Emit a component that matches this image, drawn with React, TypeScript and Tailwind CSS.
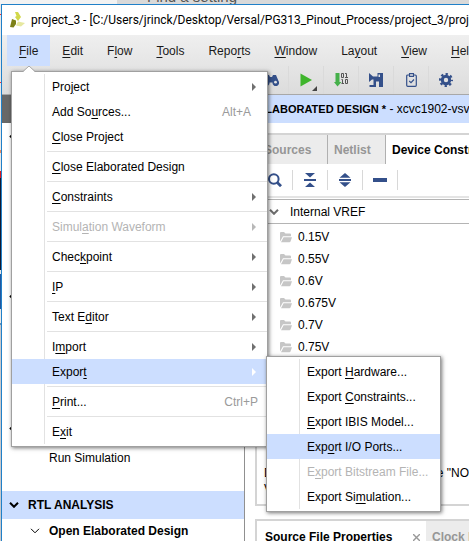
import type { ReactNode } from "react";

type Entry = {
  label: string;
  mnemonic?: number;
  shortcut?: string;
  submenu?: boolean;
  disabled?: boolean;
  active?: boolean;
  separated?: boolean;
};

const menuBar = [
  { label: "File", mnemonic: 0 },
  { label: "Edit", mnemonic: 0 },
  { label: "Flow", mnemonic: 1 },
  { label: "Tools", mnemonic: 0 },
  { label: "Reports", mnemonic: 4 },
  { label: "Window", mnemonic: 0 },
  { label: "Layout", mnemonic: 2 },
  { label: "View", mnemonic: 0 },
  { label: "Help", mnemonic: 0 },
];

const fileMenu: Entry[] = [
  { label: "Project", mnemonic: 3, submenu: true },
  { label: "Add Sources...", mnemonic: 6, shortcut: "Alt+A" },
  { label: "Close Project", mnemonic: 0 },
  { label: "Close Elaborated Design", mnemonic: 0, separated: true },
  { label: "Constraints", mnemonic: 0, submenu: true, separated: true },
  { label: "Simulation Waveform", mnemonic: 5, submenu: true, disabled: true, separated: true },
  { label: "Checkpoint", mnemonic: 4, submenu: true, separated: true },
  { label: "IP", mnemonic: 0, submenu: true, separated: true },
  { label: "Text Editor", mnemonic: 6, submenu: true, separated: true },
  { label: "Import", mnemonic: 1, submenu: true, separated: true },
  { label: "Export", mnemonic: 5, submenu: true, active: true },
  { label: "Print...", mnemonic: 0, shortcut: "Ctrl+P", separated: true },
  { label: "Exit", mnemonic: 1, separated: true },
];

const exportMenu: Entry[] = [
  { label: "Export Hardware...", mnemonic: 7 },
  { label: "Export Constraints...", mnemonic: 7 },
  { label: "Export IBIS Model...", mnemonic: 0 },
  { label: "Export I/O Ports...", mnemonic: 3, active: true },
  { label: "Export Bitstream File...", mnemonic: 1, disabled: true },
  { label: "Export Simulation...", mnemonic: 9 },
];

const voltages = ["0.15V", "0.55V", "0.6V", "0.675V", "0.7V", "0.75V"];

function Mnemonic({ label, at }: { label: string; at?: number }) {
  if (at === undefined) return <>{label}</>;
  return (
    <>
      {label.slice(0, at)}
      <span className="underline underline-offset-2">{label[at]}</span>
      {label.slice(at + 1)}
    </>
  );
}

function PopupMenu({ entries, name }: { entries: Entry[]; name: string }) {
  return (
    <div
      role="menu"
      aria-label={name}
      className="relative border border-[#a0a0a0] bg-white py-[2px] shadow-[1px_1px_4px_rgba(0,0,0,0.55)]"
    >
      <div className="absolute top-[2px] bottom-[2px] left-8 w-px bg-[#e2e2e2]" />
      {entries.map((e) => (
        <div key={e.label} className="relative">
          {e.separated && (
            <div className="flex h-[5px] items-center pl-[35px]">
              <div className="h-px w-full bg-[#e2e2e2]" />
            </div>
          )}
          <button
            role="menuitem"
            disabled={e.disabled}
            className={`flex h-[25px] w-full items-center justify-between pl-10 text-left whitespace-nowrap ${
              e.active ? "bg-[#ccdeff]" : ""
            } ${e.disabled ? "text-[#b4b4b4]" : "text-black"}`}
          >
            <span>
              <Mnemonic label={e.label} at={e.mnemonic} />
            </span>
            {e.shortcut && (
              <span className={`text-[#9a9a9a] ${e.shortcut === "Ctrl+P" ? "pr-[9px]" : "pr-4"}`}>{e.shortcut}</span>
            )}
            {e.submenu && (
              <svg
                className={`mr-[11px] h-2 w-1 ${e.active ? "text-white" : e.disabled ? "text-[#b8b8b8]" : "text-[#707070]"}`}
                viewBox="0 0 4 8"
                fill="currentColor"
              >
                <path d="M0 0L4 4L0 8Z" />
              </svg>
            )}
          </button>
        </div>
      ))}
    </div>
  );
}

function ToolButton({ name, children, className = "" }: { name: string; children: ReactNode; className?: string }) {
  return (
    <button
      aria-label={name}
      className={`relative flex w-[35px] shrink-0 items-center justify-center border-r ${className}`}
    >
      {children}
    </button>
  );
}

function Chevron({ className = "" }: { className?: string }) {
  return (
    <svg className={`h-[6px] w-[10px] shrink-0 ${className}`} viewBox="0 0 10 6" fill="none" stroke="currentColor">
      <path d="M1 0.8L5 4.8L9 0.8" />
    </svg>
  );
}

function Folder() {
  return (
    <svg className="h-[11px] w-3 shrink-0" viewBox="0 0 12 11" fill="#c6c6c6">
      <path d="M0 1Q0 0 1 0H4L5.5 1.5H10Q11 1.5 11 2.5V4.3H3L1.2 7.5L0 9.5Z" />
      <path d="M3.6 5.3H12L10.6 9.3Q10.3 10.2 9.4 10.2H1Z" />
    </svg>
  );
}

function Toolbar() {
  return (
    <div className="flex h-7 pl-[252px]">
      <ToolButton name="Find" className="border-[#dadada]">
        <svg className="h-[12px] w-[16px]" viewBox="0 0 16 12" fill="#34508a">
          <path d="M3 1H6L7 3H9L10 1H13L15.5 7A3.3 3.3 0 1 1 9.5 8.5H6.5A3.3 3.3 0 1 1 .5 7Z" />
          <circle cx="3.5" cy="8.2" r="1.4" fill="#e2e2e2" />
          <circle cx="12.5" cy="8.2" r="1.4" fill="#e2e2e2" />
        </svg>
      </ToolButton>
      <ToolButton name="Run" className="border-[#dadada]">
        <svg className="h-[14px] w-[12px]" viewBox="0 0 12 14" fill="#3fb52c">
          <path d="M0.5 0.5L12 7L0.5 13.5Z" />
        </svg>
        <svg className="absolute right-[6px] bottom-[3px] size-[5px]" viewBox="0 0 5 5" fill="#444">
          <path d="M5 0V5H0Z" />
        </svg>
      </ToolButton>
      <ToolButton name="Generate Bitstream" className="border-[#dadada]">
        <svg className="h-[14px] w-[14px]" viewBox="0 0 14 14">
          <path d="M1.5 0H5.5V9H7.5L3.5 13.5L0 9H1.5Z" fill="#45b04a" />
          <g fill="none" stroke="#555" strokeWidth="1">
            <path d="M7.5 0.5H9.5V4.5H7.5ZM11 0.5H12.5V4.5M11 4.5H14" />
            <path d="M7.5 6.5H8.5V10.5M7.5 10.5H10M11.5 6.5H13.5V10.5H11.5Z" />
          </g>
        </svg>
      </ToolButton>
      <ToolButton name="Open Block Design" className="border-[#dadada]">
        <svg className="h-[14px] w-[14px]" viewBox="0 0 14 14" fill="#34508a">
          <path d="M0 0L4 3.5H8.5V0H14V14H10V8.5H7V14H0.5V12H4.5V6.5H3L0 9Z" />
          <path d="M9.5 1.5H11V4H9.5Z" fill="#e2e2e2" />
        </svg>
      </ToolButton>
      <ToolButton name="Report" className="border-[#dadada]">
        <svg className="h-[14px] w-[11px]" viewBox="0 0 11 14" fill="none" stroke="#34508a">
          <rect x="0.7" y="2" width="9.6" height="11.3" rx="1" strokeWidth="1.2" />
          <path d="M3.5 0.6H7.5V3.4H3.5Z" fill="#e2e2e2" strokeWidth="1.1" />
          <path d="M3.2 8L5 9.7L8 6.5" strokeWidth="1.2" />
        </svg>
      </ToolButton>
      <ToolButton name="Settings" className="border-transparent">
        <svg className="size-[14px]" viewBox="0 0 14 14" fill="none" stroke="#34508a">
          <circle cx="7" cy="7" r="3.7" strokeWidth="3" />
          <circle cx="7" cy="7" r="5.9" strokeWidth="2.2" strokeDasharray="2.32 2.32" strokeDashoffset="1.16" />
        </svg>
      </ToolButton>
    </div>
  );
}

function Navigator() {
  return (
    <aside className="flex w-[243px] shrink-0 flex-col border-r border-[#909090] bg-white">
      <div className="h-[28px] shrink-0 bg-[#686868]" />
      <div className="h-[160px] shrink-0 pt-3 pl-[7px]">
        <Chevron className="stroke-2" />
      </div>
      <div className="h-[132px] shrink-0 pt-3 pl-[7px]">
        <Chevron className="stroke-2" />
      </div>
      <div className="h-[33px] shrink-0 pt-3 pl-[7px]">
        <Chevron className="stroke-2" />
      </div>
      <a href="#run" className="py-[2px] pl-[47px] leading-4">
        Run Simulation
      </a>
      <div className="mt-[23px] flex h-7 shrink-0 items-center gap-[9px] bg-[#ccdeff] pl-[7px] font-bold">
        <Chevron className="stroke-2" />
        RTL ANALYSIS
      </div>
      <div className="flex h-6 shrink-0 items-center gap-[9px] pl-7 font-bold">
        <Chevron />
        Open Elaborated Design
      </div>
    </aside>
  );
}

function Workspace() {
  return (
    <main className="flex min-w-0 flex-1 flex-col whitespace-nowrap">
      <h1 className="flex h-7 shrink-0 items-center bg-[#ccdeff] pl-[13px]">
        <span className="text-[11px] font-bold">ELABORATED DESIGN&nbsp;*</span>
        <span>&nbsp;- xcvc1902-vsva2197</span>
      </h1>
      <section className="mt-[10px] ml-[10px] h-[373px] shrink-0 border-2 border-r-0 border-[#d4d4d4]">
        <div role="tablist" className="flex h-[29px] font-bold">
          <button
            role="tab"
            className="w-[71px] shrink-0 border-r border-[#b0b0b0] bg-[#ececec] pl-[7px] text-left text-[#969696]"
          >
            Sources
          </button>
          <button
            role="tab"
            className="w-[58px] shrink-0 border-r border-[#b0b0b0] bg-[#ececec] pl-[6px] text-left text-[#969696]"
          >
            Netlist
          </button>
          <button role="tab" aria-selected="true" className="shrink-0 pl-[6px]">
            Device Constraints
          </button>
        </div>
        <div className="flex h-[34px] items-center border-b-2 border-[#e4e4e4] text-[#34508a]">
          <button aria-label="Search" className="flex h-5 w-9 items-center justify-center border-r border-[#d8d8d8]">
            <svg className="size-[14px]" viewBox="0 0 14 14" fill="none" stroke="currentColor" strokeWidth="2">
              <circle cx="5.8" cy="6" r="4.8" />
              <path d="M9.3 9.5L13 13.2" strokeWidth="2.8" />
            </svg>
          </button>
          <button aria-label="Collapse All" className="flex h-5 w-[35px] items-center justify-center border-r border-[#d8d8d8]">
            <svg className="h-[14px] w-3" viewBox="0 0 12 14" fill="currentColor">
              <path d="M1 0H11L6 4.5ZM0 6H12V8H0ZM1 14H11L6 9.5Z" />
            </svg>
          </button>
          <button aria-label="Expand All" className="flex h-5 w-[35px] items-center justify-center border-r border-[#d8d8d8]">
            <svg className="h-[14px] w-3" viewBox="0 0 12 14" fill="currentColor">
              <path d="M0.5 4.7L6 0L11.5 4.7ZM0 6H12V8H0ZM0.5 9.3L6 14L11.5 9.3Z" />
            </svg>
          </button>
          <button aria-label="Remove" className="flex h-5 w-[35px] items-center justify-center border-r border-[#d8d8d8]">
            <svg className="h-1 w-[14px]" viewBox="0 0 14 4" fill="currentColor">
              <path d="M0 0H14V4H0Z" />
            </svg>
          </button>
        </div>
        <div className="mt-px flex h-[25px] items-center gap-[11px] border-y border-[#b4b4b4] pl-3">
          <Chevron className="stroke-2 text-[#6c6c6c]" />
          Internal VREF
        </div>
        <ul className="pt-[2px]">
          {voltages.map((v) => (
            <li key={v} className="flex h-[22px] items-center gap-[6px] pl-[23px]">
              <Folder />
              {v}
            </li>
          ))}
        </ul>
        <div className="mt-[107px] pl-[7px] leading-4">
          <p>Drop I/O banks on voltages or the "NONE" folder</p>
          <p>VREF.</p>
        </div>
      </section>
      <section className="mt-[13px] ml-[10px] shrink-0 border-2 border-r-0 border-b-0 border-[#d4d4d4]">
        <div role="tablist" className="flex h-8 font-bold">
          <button
            role="tab"
            aria-selected="true"
            className="flex w-[169px] shrink-0 items-center justify-between pr-[6px] pl-2"
          >
            Source File Properties
            <svg className="size-[7px]" viewBox="0 0 7 7" stroke="#999" strokeWidth="1.4">
              <path d="M0 0L7 7M7 0L0 7" />
            </svg>
          </button>
          <button role="tab" className="shrink-0 grow bg-[#ececec] pl-[6px] text-left text-[#969696]">
            Clock Regions
          </button>
        </div>
      </section>
    </main>
  );
}

function BackgroundEdge() {
  return (
    <div className="flex w-px shrink-0 flex-col bg-[#e8e8e8]">
      <div className="mt-[10px] h-px bg-red-500" />
      <div className="mt-[67px] h-px bg-red-500" />
      <div className="mt-[67px] h-[3px] bg-[#e88860]" />
      <div className="mt-[18px] h-[7px] bg-[#d81820]" />
      <div className="h-[92px] bg-[#101830]" />
      <div className="mt-1 h-[35px] bg-[#2058a0]" />
      <div className="mt-[14px] h-[2px] bg-[#6090b8]" />
      <div className="flex-1 bg-[#c8c8cc]" />
    </div>
  );
}

export default function App() {
  return (
    <div className="relative flex h-screen flex-col overflow-hidden bg-white font-['Liberation_Sans',Arial,sans-serif] text-[12px] text-black">
      <div className="relative h-1 shrink-0 overflow-hidden bg-[#d9d9d9]">
        <div className="absolute bottom-[-1px] left-[147px] text-[15px] leading-4 text-[#555]">Find a setting</div>
        <div className="h-full w-[117px] bg-[#f2f2f2]" />
      </div>
      <div className="flex min-h-0 flex-1">
        <BackgroundEdge />
        <div className="flex min-w-0 flex-1 flex-col border-t border-l border-[#2080c8]">
          <header className="flex h-[30px] shrink-0 items-center gap-[6px] pl-2 font-[Roboto,'Open_Sans',sans-serif] whitespace-nowrap">
            <svg className="h-4 w-[15px] shrink-0" viewBox="0 0 15 16">
              <path d="M5 0H8L11 5L8 9L5 5L6.5 4Z" fill="#d2d84a" />
              <path d="M2 7L6 8.5V12L3.5 15.5L0 15Z" fill="#7d8118" />
              <path d="M8 9.5L15 11L11 14.5L6 13.5Z" fill="#e6e8a0" />
            </svg>
            project_3 - [C:/Users/jrinck/Desktop/Versal/PG313_Pinout_Process/project_3/project_3.xpr]
          </header>
          <div className="shrink-0 border-b border-[#a8a8a8] bg-linear-to-b from-[#efefef] to-[#dcdcdc]">
            <nav className="flex h-[31px] pl-[5px] text-[#1a1a1a]">
              {menuBar.map((m, i) => (
                <button key={m.label} className={`shrink-0 px-3 ${i === 0 ? "bg-[#ccdeff]" : ""}`}>
                  <Mnemonic label={m.label} at={m.mnemonic} />
                </button>
              ))}
            </nav>
            <Toolbar />
          </div>
          <div className="flex min-h-0 flex-1">
            <Navigator />
            <Workspace />
          </div>
        </div>
      </div>

      <div className="absolute top-[71px] left-[11px] w-[257px]">
        <PopupMenu entries={fileMenu} name="File" />
        <svg className="absolute -top-[5px] left-3 h-[6px] w-3" viewBox="0 0 12 6" fill="white">
          <path d="M0 6L6 0L12 6Z" />
          <path d="M0 5.5L6 0L12 5.5" fill="none" stroke="#a8a8a8" />
        </svg>
      </div>
      <div className="absolute top-[356px] left-[266px] w-[175px]">
        <PopupMenu entries={exportMenu} name="Export" />
      </div>
    </div>
  );
}
